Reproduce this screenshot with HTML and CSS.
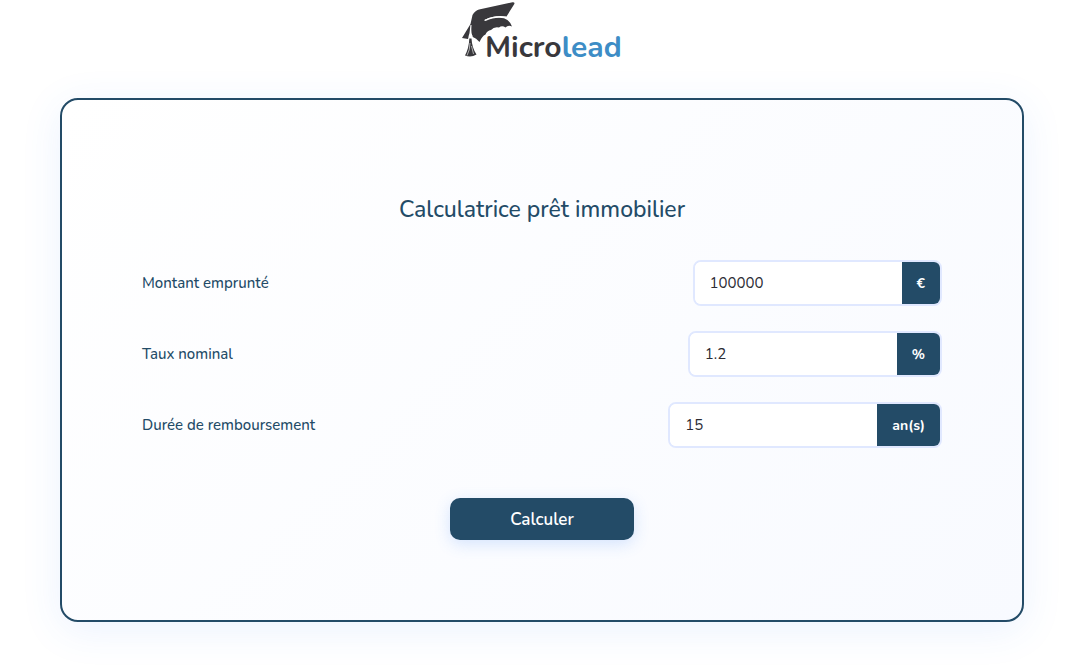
FILE: index.html
```html
<!DOCTYPE html>
<html lang="fr">
<head>
<meta charset="utf-8">
<meta name="viewport" content="width=device-width, initial-scale=1">
<title>Calculatrice prêt immobilier</title>
<link rel="stylesheet" href="styles.css">
</head>
<body>
<header class="header">
  <svg class="logo" width="164" height="62" viewBox="460 0 164 62" role="img" aria-label="Microlead">
    <path class="logo-dark" d="M472.500 15Q475 10.500 479 9.500L512.500 2.200Q515.500 2 514 4.500L506.500 16.500Q495 14.500 484.500 20L485.500 21Q496 16.300 504 18.300Q510 20.500 512 26.500Q508 24.800 505.500 27.500Q502 24.800 499 27.500Q494 26.500 491 30Q487 30.500 485.500 34.500Q482 36 479.500 42Q476 38 472.800 37L471.500 33L470.500 25L469.500 33L468 39L462 38L470.500 24Z"/>
    <path class="logo-line" d="M484.500 20.300Q494 15.300 506 17.300M471 25L470.500 35"/>
    <circle class="logo-light" cx="470.500" cy="36" r="1.800"/>
    <path class="logo-dark" d="M469.300 38.500H471.500Q472 48 476.500 54.500Q471 58 465 55.500Q469 48 469.300 38.500Z"/>
    <path class="logo-line logo-thin" d="M470 43Q470 50 467 55.500M471.500 46L473.500 54"/>
    <text class="logo-text" x="485" y="57">Micro<tspan class="logo-blue">lead</tspan></text>
  </svg>
</header>
<main class="card">
  <h1 class="title">Calculatrice prêt immobilier</h1>
  <form class="form">
    <div class="row">
      <label class="label" for="amount">Montant emprunté</label>
      <div class="group"><input class="input" id="amount" type="text" value="100000"><span class="unit">€</span></div>
    </div>
    <div class="row">
      <label class="label" for="rate">Taux nominal</label>
      <div class="group"><input class="input" id="rate" type="text" value="1.2"><span class="unit">%</span></div>
    </div>
    <div class="row">
      <label class="label" for="years">Durée de remboursement</label>
      <div class="group"><input class="input" id="years" type="text" value="15"><span class="unit">an(s)</span></div>
    </div>
    <button class="submit" type="button">Calculer</button>
  </form>
</main>
</body>
</html>
```
FILE: styles.css
```css
* { box-sizing: border-box; }
body {
  margin: 0;
  background: #fff;
  color: #234b67;
  font-family: Nunito, "Noto Sans", sans-serif;
}
.header {
  display: flex;
  justify-content: center;
  padding: 0 57px 36px 60px;
}
.logo { display: block; overflow: visible; }
.logo-dark { fill: #39383c; }
.logo-light { fill: #fff; }
.logo-line { fill: none; stroke: #fff; stroke-width: 1; }
.logo-thin { stroke-width: 0.6; }
.logo-text {
  fill: #39383c;
  font-family: Nunito, Lato, sans-serif;
  font-size: 30px;
  font-weight: 700;
}
.logo-blue { fill: #3d8dc6; }
.card {
  margin: 0 57px 48px 60px;
  padding: 92px 80px 80px;
  border: 2px solid #234b67;
  border-radius: 18px;
  background: linear-gradient(135deg, #fff 0%, #f8faff 100%);
  box-shadow: 0 8px 40px rgba(59, 130, 246, 0.1);
}
.title {
  margin: 0 0 32px;
  font-size: 23px;
  line-height: 36px;
  font-weight: 500;
  text-align: center;
}
.form {
  display: flex;
  flex-direction: column;
  gap: 25px;
}
.row {
  display: flex;
  align-items: center;
  justify-content: space-between;
}
.label {
  font-size: 15px;
  line-height: 20px;
  font-weight: 500;
}
.group {
  display: flex;
  height: 46px;
  border: 2px solid #e0e8ff;
  border-radius: 8px;
  overflow: hidden;
  background: #fff;
}
.input {
  width: 207px;
  padding: 0 15px;
  border: 0;
  outline: 0;
  background: #fff;
  color: #2c2c34;
  font: 400 15px Nunito, "Noto Sans", sans-serif;
}
.unit {
  display: flex;
  align-items: center;
  padding: 0 15px;
  background: #234b67;
  color: #fff;
  font-size: 14px;
  font-weight: 700;
}
.submit {
  align-self: center;
  width: 184px;
  height: 42px;
  margin-top: 25px;
  border: 0;
  border-radius: 10px;
  background: #234b67;
  box-shadow: 0 4px 16px rgba(59, 130, 246, 0.2);
  color: #fff;
  font: 600 17px Nunito, "Noto Sans", sans-serif;
}
```
